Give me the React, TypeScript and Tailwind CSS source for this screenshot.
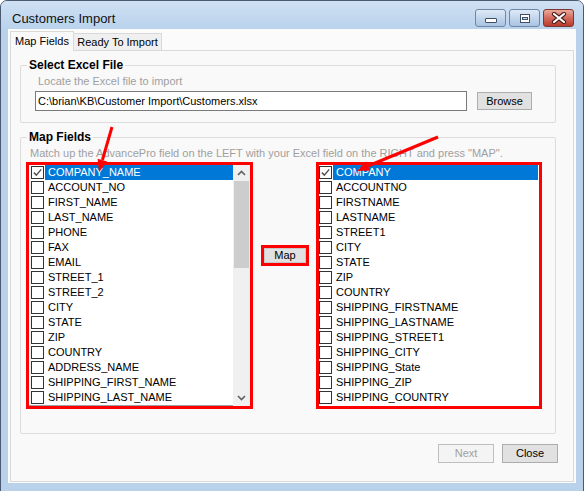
import React from "react";

const LEFT = [
  "COMPANY_NAME",
  "ACCOUNT_NO",
  "FIRST_NAME",
  "LAST_NAME",
  "PHONE",
  "FAX",
  "EMAIL",
  "STREET_1",
  "STREET_2",
  "CITY",
  "STATE",
  "ZIP",
  "COUNTRY",
  "ADDRESS_NAME",
  "SHIPPING_FIRST_NAME",
  "SHIPPING_LAST_NAME",
];

const RIGHT = [
  "COMPANY",
  "ACCOUNTNO",
  "FIRSTNAME",
  "LASTNAME",
  "STREET1",
  "CITY",
  "STATE",
  "ZIP",
  "COUNTRY",
  "SHIPPING_FIRSTNAME",
  "SHIPPING_LASTNAME",
  "SHIPPING_STREET1",
  "SHIPPING_CITY",
  "SHIPPING_State",
  "SHIPPING_ZIP",
  "SHIPPING_COUNTRY",
];

function Check({ checked }: { checked: boolean }) {
  return (
    <span className="w-[13px] h-[13px] border border-[#333333] bg-white flex items-center justify-center shrink-0">
      {checked && (
        <svg width="11" height="11" viewBox="0 0 11 11">
          <path d="M1.8 5.6 L4.3 8.1 L9.2 2.4" stroke="#4d4d4d" strokeWidth="1.4" fill="none" />
        </svg>
      )}
    </span>
  );
}

function Row({ label, selected }: { label: string; selected: boolean }) {
  return (
    <div className="flex items-center h-[15px]">
      <Check checked={selected} />
      <div
        className={
          selected
            ? "ml-[1px] pl-[3px] flex-1 h-[15px] leading-[15px] text-[11px] bg-[#0078d7] text-white whitespace-nowrap"
            : "ml-[1px] pl-[3px] flex-1 h-[15px] leading-[15px] text-[11px] text-black whitespace-nowrap"
        }
      >
        {label}
      </div>
    </div>
  );
}

function Scrollbar() {
  return (
    <div className="w-[17px] bg-[#f0f0f0] flex flex-col shrink-0">
      <div className="h-[16px] flex items-center justify-center">
        <svg width="9" height="6" viewBox="0 0 9 6">
          <path d="M1 5 L4.5 1.5 L8 5" stroke="#606060" strokeWidth="1.6" fill="none" />
        </svg>
      </div>
      <div className="h-[87px] mx-[1px] bg-[#cdcdcd]" />
      <div className="flex-1" />
      <div className="h-[16px] flex items-center justify-center">
        <svg width="9" height="6" viewBox="0 0 9 6">
          <path d="M1 1 L4.5 4.5 L8 1" stroke="#606060" strokeWidth="1.6" fill="none" />
        </svg>
      </div>
    </div>
  );
}

function CaptionButtons() {
  return (
    <div className="flex gap-[3px] mt-[8px] mr-[9px]">
      <div className="w-[31px] h-[18px] rounded-[3px] border border-[#6f87a5] bg-gradient-to-b from-[#dfeaf7] via-[#c3d6ec] to-[#a9c3e3] flex items-end justify-center pb-[3px]">
        <div className="w-[12px] h-[5px] rounded-[1px] border border-[#3f4f63] bg-white" />
      </div>
      <div className="w-[31px] h-[18px] rounded-[3px] border border-[#6f87a5] bg-gradient-to-b from-[#dfeaf7] via-[#c3d6ec] to-[#a9c3e3] flex items-center justify-center">
        <div className="w-[10px] h-[9px] border border-[#3f4f63] bg-white flex items-center justify-center">
          <div className="w-[6px] h-[3px] border border-[#3f4f63] bg-[#c9d9ec]" />
        </div>
      </div>
      <div className="w-[31px] h-[18px] rounded-[3px] border border-[#7a3630] bg-gradient-to-b from-[#eaa89a] via-[#d2695b] to-[#b8392d] flex items-center justify-center">
        <svg width="16" height="12" viewBox="0 0 16 12">
          <path d="M3 2 L13 10 M13 2 L3 10" stroke="#4a1a16" strokeWidth="4.2" strokeLinecap="round" />
          <path d="M3 2 L13 10 M13 2 L3 10" stroke="#ffffff" strokeWidth="2.2" strokeLinecap="round" />
        </svg>
      </div>
    </div>
  );
}

export default function App() {
  return (
    <div className="relative w-[585px] h-[491px] overflow-hidden bg-white font-['Liberation_Sans',Arial,sans-serif] text-black">
      <div className="w-[584px] h-[500px] rounded-t-[7px] border border-[#4a5a70] bg-[#b9d1ea] flex flex-col">
        {/* title bar */}
        <div className="h-[28px] flex items-start justify-between bg-gradient-to-b from-[#cfe0f3] to-[#bad2ec] rounded-t-[6px]">
          <div className="ml-[11px] mt-[10px] text-[13px] leading-[15px] text-[#111111]">Customers Import</div>
          <CaptionButtons />
        </div>

        {/* client area */}
        <div className="ml-[7px] w-[568px] h-[454px] bg-[#fbfbfb] flex flex-col">
          {/* tabs */}
          <div className="flex items-end h-[21px] pl-[2px] pt-[2px]">
            <div className="relative z-10 -mb-px w-[64px] h-[20px] border border-b-0 border-[#d9d9d9] bg-[#f9f9f9] flex items-center justify-center text-[11px] leading-[13px] pb-[1px]">
              Map Fields
            </div>
            <div className="w-[88px] h-[17px] border border-l-0 border-b-0 border-[#d9d9d9] bg-[#f0f0f0] flex items-center justify-center text-[11px] leading-[13px]">
              Ready To Import
            </div>
          </div>

          {/* tab page */}
          <div className="ml-[2px] w-[564px] h-[432px] border border-[#d9d9d9] bg-[#f9f9f9] flex flex-col">
            {/* Select Excel File */}
            <fieldset className="ml-[9px] mt-[7px] w-[536px] border border-[#dcdcdc] rounded-[2px] pb-[11px]">
              <legend className="ml-[6px] px-[2px] text-[12px] leading-[14px] font-bold">Select Excel File</legend>
              <div className="mt-[3px] ml-[17px] text-[11px] leading-[13px] text-[#a0a0a0]">
                Locate the Excel file to import
              </div>
              <div className="mt-[3px] flex items-center">
                <div className="ml-[14px] w-[432px] h-[20px] border border-[#7a7a7a] bg-white px-[2px] text-[11px] leading-[18px] whitespace-nowrap">
                  C:\brian\KB\Customer Import\Customers.xlsx
                </div>
                <div className="ml-[10px] w-[55px] h-[18px] border border-[#adadad] bg-[#e1e1e1] flex items-center justify-center text-[11px] leading-[13px]">
                  Browse
                </div>
              </div>
            </fieldset>

            {/* Map Fields */}
            <fieldset className="ml-[9px] mt-[7px] w-[536px] border border-[#dcdcdc] rounded-[2px] pb-[24px]">
              <legend className="ml-[6px] px-[2px] text-[12px] leading-[14px] font-bold">Map Fields</legend>
              <div className="mt-[3px] ml-[9px] text-[11px] leading-[13px] text-[#a0a0a0] whitespace-nowrap">
                Match up the AdvancePro field on the LEFT with your Excel field on the RIGHT and press "MAP".
              </div>
              <div className="mt-[2px] ml-[5px] flex items-start">
                {/* left list */}
                <div className="w-[227px] h-[247px] border-[3px] border-[#ff0000] bg-white flex">
                  <div className="flex-1 pl-[2px] border-b border-[#a0a0a0]">
                    {LEFT.map((l, i) => (
                      <Row key={l} label={l} selected={i === 0} />
                    ))}
                  </div>
                  <Scrollbar />
                </div>

                {/* map button */}
                <div className="ml-[8px] mt-[83px] w-[48px] h-[21px] border-[3px] border-[#ff0000] bg-[#e1e1e1] flex items-center justify-center">
                  <div className="w-full h-full border border-[#c8c8c8] flex items-center justify-center text-[11px] leading-[13px]">
                    Map
                  </div>
                </div>

                {/* right list */}
                <div className="ml-[7px] w-[226px] h-[247px] border-[3px] border-[#ff0000] bg-white pr-[1px]">
                  {RIGHT.map((l, i) => (
                    <Row key={l} label={l} selected={i === 0} />
                  ))}
                </div>
              </div>
            </fieldset>

            {/* bottom buttons */}
            <div className="mt-[10px] flex justify-end gap-[8px] pr-[15px]">
              <div className="w-[56px] h-[19px] border border-[#bfbfbf] bg-[#f4f4f4] flex items-center justify-center text-[11px] leading-[13px] text-[#a0a0a0]">
                Next
              </div>
              <div className="w-[56px] h-[19px] border border-[#adadad] bg-[#e1e1e1] flex items-center justify-center text-[11px] leading-[13px]">
                Close
              </div>
            </div>
          </div>
        </div>
      </div>

      {/* red annotation arrows */}
      <svg className="absolute left-0 top-0 pointer-events-none" width="585" height="491" viewBox="0 0 585 491">
        <line x1="112" y1="127" x2="102.4" y2="160" stroke="#ff0000" strokeWidth="3" />
        <polygon points="99,172 107.2,161.5 97.6,158.7" fill="#ff0000" />
        <line x1="438" y1="137" x2="368" y2="166" stroke="#ff0000" strokeWidth="3" />
        <polygon points="357,171 370,170.6 366.2,161.4" fill="#ff0000" />
      </svg>
    </div>
  );
}
